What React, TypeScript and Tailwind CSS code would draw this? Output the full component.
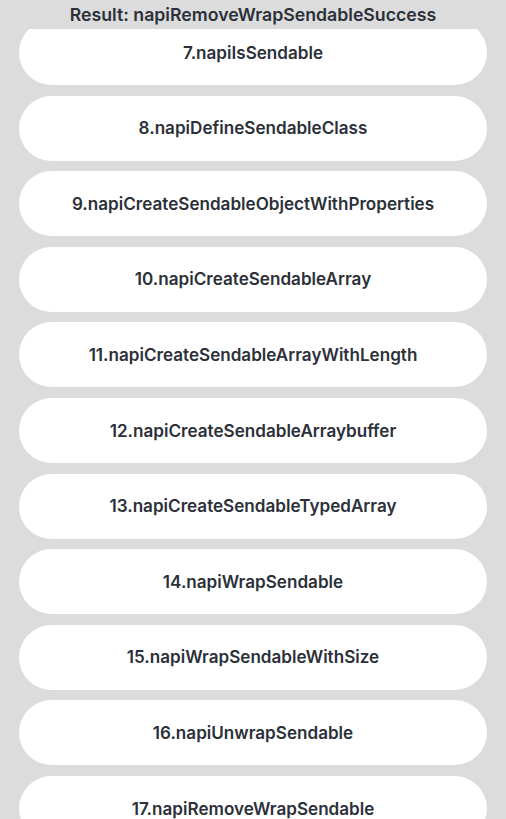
import React from 'react';

const items = [
  '7.napiIsSendable',
  '8.napiDefineSendableClass',
  '9.napiCreateSendableObjectWithProperties',
  '10.napiCreateSendableArray',
  '11.napiCreateSendableArrayWithLength',
  '12.napiCreateSendableArraybuffer',
  '13.napiCreateSendableTypedArray',
  '14.napiWrapSendable',
  '15.napiWrapSendableWithSize',
  '16.napiUnwrapSendable',
  '17.napiRemoveWrapSendable',
];

export default function App() {
  return (
    <div
      className="h-[819px] w-[506px] bg-[#dcdcdc] flex flex-col overflow-hidden text-[#2b3039]"
      style={{ fontFamily: 'Inter, "Noto Sans", sans-serif' }}
    >
      <div className="h-[29px] shrink-0 relative z-10 bg-[#dcdcdc] flex items-center justify-center text-[17.7px] font-semibold leading-[28px]">
        Result: napiRemoveWrapSendableSuccess
      </div>
      <div className="flex-1 overflow-hidden">
        <div className="-mt-[9px] flex flex-col gap-[10.6px] px-[19px]">
          {items.map((label) => (
            <button
              key={label}
              className="h-[65px] w-full shrink-0 rounded-full bg-white flex items-center justify-center text-[17.1px] font-semibold"
            >
              {label}
            </button>
          ))}
        </div>
      </div>
    </div>
  );
}
